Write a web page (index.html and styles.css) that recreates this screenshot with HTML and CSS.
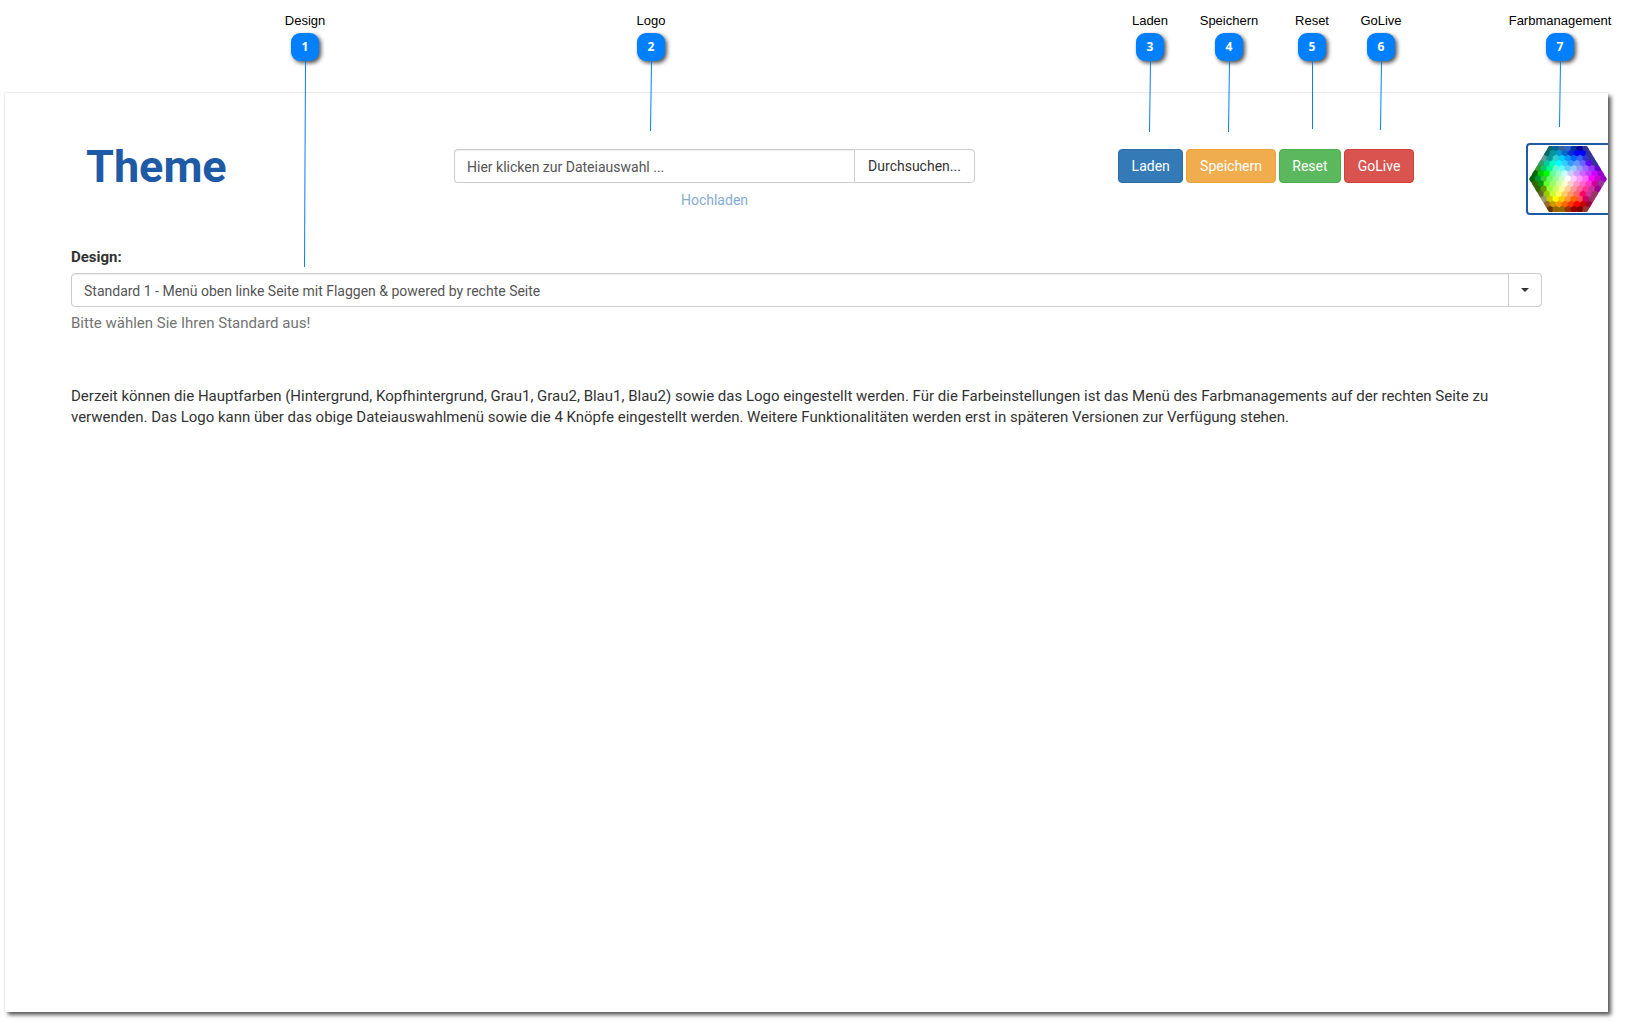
FILE: index.html
```html
<!DOCTYPE html>
<html lang="de">
<head>
<meta charset="utf-8">
<title>Theme</title>
<link rel="stylesheet" href="styles.css">
</head>
<body>
<main class="panel">
  <header class="toolbar">
    <h1 class="title">Theme</h1>
    <form class="upload">
      <div class="input-group">
        <input class="field" type="text" aria-label="Logo" value="Hier klicken zur Dateiauswahl ..." readonly>
        <button class="addon" type="button">Durchsuchen...</button>
      </div>
      <a class="upload-link" href="#">Hochladen</a>
    </form>
    <div class="actions">
      <button class="btn btn-primary" type="button">Laden</button>
      <button class="btn btn-warning" type="button">Speichern</button>
      <button class="btn btn-success" type="button">Reset</button>
      <button class="btn btn-danger" type="button">GoLive</button>
    </div>
    <button class="picker" type="button" aria-label="Farbmanagement">
      <svg class="wheel" viewBox="0 0 78 66" aria-hidden="true">
        <defs><clipPath id="hex"><path d="M20 0H58L78 33L58 66H20L0 33Z"/></clipPath></defs>
        <g id="cells" clip-path="url(#hex)"></g>
      </svg>
    </button>
  </header>
  <section class="content">
    <label class="label" for="design">Design:</label>
    <div class="select-wrap">
      <select class="select" id="design">
        <option>Standard 1 - Menü oben linke Seite mit Flaggen &amp; powered by rechte Seite</option>
      </select>
      <span class="caret-box"><span class="caret"></span></span>
    </div>
    <p class="help">Bitte wählen Sie Ihren Standard aus!</p>
    <p class="text">Derzeit können die Hauptfarben (Hintergrund, Kopfhintergrund, Grau1, Grau2, Blau1, Blau2) sowie das Logo eingestellt werden. Für die Farbeinstellungen ist das Menü des Farbmanagements auf der rechten Seite zu verwenden. Das Logo kann über das obige Dateiauswahlmenü sowie die 4 Knöpfe eingestellt werden. Weitere Funktionalitäten werden erst in späteren Versionen zur Verfügung stehen.</p>
  </section>
</main>

<div class="callout callout-1"><span>Design</span><b class="badge">1</b><svg class="line" width="4" height="206"><path d="M2.5 0L1.5 206"/></svg></div>
<div class="callout callout-2"><span>Logo</span><b class="badge">2</b><svg class="line" width="4" height="70"><path d="M2.5 0L1.5 70"/></svg></div>
<div class="callout callout-3"><span>Laden</span><b class="badge">3</b><svg class="line" width="4" height="71"><path d="M2.5 0L1.5 71"/></svg></div>
<div class="callout callout-4"><span>Speichern</span><b class="badge">4</b><svg class="line" width="4" height="71"><path d="M2.5 0L1.5 71"/></svg></div>
<div class="callout callout-5"><span>Reset</span><b class="badge">5</b><svg class="line" width="4" height="68"><path d="M2.5 0V68"/></svg></div>
<div class="callout callout-6"><span>GoLive</span><b class="badge">6</b><svg class="line" width="4" height="69"><path d="M2.5 0L1.5 69"/></svg></div>
<div class="callout callout-7"><span>Farbmanagement</span><b class="badge">7</b><svg class="line" width="4" height="66"><path d="M2.5 0L1.5 66"/></svg></div>
<script src="wheel.js"></script>
</body>
</html>
```
FILE: styles.css
```css
* { box-sizing: border-box; }
body {
  margin: 0;
  min-height: 100vh;
  padding: 93px 19px 9px 5px;
  display: flex;
  background: #fff;
  color: #333;
  font: 15px/21px Roboto, "Liberation Sans", sans-serif;
}
button, input, select { font: 14px/20px Roboto, "Liberation Sans", sans-serif; }
.panel {
  flex: 1;
  min-width: 0;
  box-shadow: 3px 3px 4px rgba(0, 0, 0, .65), 0 0 2px rgba(0, 0, 0, .15);
  background: #fff;
}
.toolbar {
  display: grid;
  grid-template-columns: 368fr 521fr 143fr 408px 82px;
  padding: 50px 0 0 81px;
  height: 140px;
  overflow: hidden;
}
.title {
  margin: 0;
  font-size: 45px;
  line-height: 48px;
  font-weight: 700;
  color: #1e5aa5;
}
.upload { padding-top: 6px; text-align: center; }
.input-group { display: flex; }
.field {
  flex: 1;
  min-width: 0;
  height: 34px;
  padding: 7px 12px 5px;
  border: 1px solid #ccc;
  border-right: 0;
  border-radius: 4px 0 0 4px;
  box-shadow: inset 0 1px 1px rgba(0, 0, 0, .075);
  color: #555;
}
.addon {
  width: 121px;
  height: 34px;
  padding: 6px 12px;
  border: 1px solid #ccc;
  border-radius: 0 4px 4px 0;
  background: #fff;
  color: #333;
}
.upload-link {
  display: inline-block;
  margin-top: 7px;
  font-size: 14px;
  color: #84acd2;
  text-decoration: none;
}
.actions {
  grid-column: 4;
  display: flex;
  align-items: flex-start;
  gap: 3px;
  width: 296px;
  padding-top: 6px;
}
.btn {
  flex: 1 0 auto;
  height: 34px;
  padding: 6px 12px;
  border: 1px solid;
  border-radius: 4px;
  color: #fff;
}
.btn-primary { background: #337ab7; border-color: #2e6da4; }
.btn-warning { background: #f0ad4e; border-color: #eea236; }
.btn-success { background: #5cb85c; border-color: #4cae4c; }
.btn-danger { background: #d9534f; border-color: #d43f3a; }
.picker {
  width: 88px;
  height: 72px;
  padding: 1px;
  border: 2px solid #1e5aa5;
  border-radius: 4px;
  background: #fff;
  text-align: left;
}
.wheel { display: block; width: 78px; height: 66px; }
.content { padding: 14px 66px 0; }
.label { display: block; margin-bottom: 5px; font-weight: 700; }
.select-wrap { display: grid; }
.select, .caret-box { grid-area: 1 / 1; }
.select {
  appearance: none;
  height: 34px;
  padding: 7px 46px 5px 12px;
  border: 1px solid #ccc;
  border-radius: 4px;
  background: #fff;
  box-shadow: inset 0 1px 1px rgba(0, 0, 0, .075);
  color: #555;
}
.caret-box {
  justify-self: end;
  width: 34px;
  border: 1px solid #ccc;
  border-radius: 0 4px 4px 0;
  background: #fff;
  display: grid;
  place-items: center;
  pointer-events: none;
}
.caret { border: 4px solid transparent; border-top-color: #333; border-bottom: 0; }
.help { margin: 6px 0 0; color: #737373; }
.text { margin: 52px 0 0; }

/* Callouts lie over the page and point at its controls */
.callout {
  position: absolute;
  top: 13px;
  width: 110px;
  display: flex;
  flex-direction: column;
  align-items: center;
  color: #000;
  font: 13px/16px "Liberation Sans", Arial, sans-serif;
  pointer-events: none;
}
.badge {
  width: 28px;
  height: 28px;
  margin-top: 4px;
  border-radius: 9px;
  background: #0080ff;
  box-shadow: 2px 2px 4px rgba(0, 0, 0, .7);
  color: #fff;
  font: 700 12px/28px "Open Sans", sans-serif;
  text-align: center;
}
.line { display: block; }
.line path { stroke: #0080ff; fill: none; }
.callout-1 { left: 250px; }
.callout-2 { left: 596px; }
.callout-3 { left: 1095px; }
.callout-4 { left: 1174px; }
.callout-5 { left: 1257px; }
.callout-6 { left: 1326px; }
.callout-7 { left: 1505px; }
```
FILE: wheel.js
```js
// Web-safe colour map, one string per row of hexagon cells
const rows = [
  "006666 006699 336699 3366cc 003399 003399 000099 333399",
  "006666 009999 0099cc 0066cc 0033cc 0000ff 0000ff 333399",
  "669999 009999 33cccc 00ccff 0099ff 0066ff 3366ff 3333cc 333399",
  "339966 00cc99 00ffcc 00ffff 33ccff 3399ff 6699ff 6666ff 6600ff 333399",
  "339933 00cc66 00ff99 66ffcc 66ffff 66ccff 99ccff 9999ff 9966ff 9933ff 6600cc",
  "006600 00cc00 00ff00 66ff99 99ffcc ccffff ccccff cc99ff cc66ff cc33ff cc00ff 9900cc",
  "006600 009933 33cc33 66ff66 99ff99 ccffcc ffffff ffccff ff99ff ff66ff ff00ff cc00cc 9900cc",
  "336600 009900 66ff33 99ff66 ccff99 ffffcc ffcccc ff99cc ff66cc ff33cc cc0099 993399",
  "336600 669900 99ff33 ccff66 ffff99 ffcc99 ff9999 ff6699 ff3399 cc3399 990099",
  "666633 99cc00 ccff33 ffff66 ffcc66 ff9966 ff6666 ff0066 cc3399 993366",
  "999966 cccc00 ffff00 ffcc00 ff9933 ff6600 ff5050 cc0066 993366",
  "996633 cc9900 ff9900 ff6600 ff3300 ff0000 cc0000 990033",
  "663300 996600 996600 993300 990000 800000 993333"
];
rows[0] = rows[0].replace("003399 003399", "003399");
const w = 6, h = 5.1;
document.getElementById("cells").innerHTML = rows.map((row, r) => {
  const cells = row.split(" ");
  return cells.map((c, i) => {
    const x = 39 + (i - (cells.length - 1) / 2) * w;
    const y = 33 + (r - 6) * h;
    return `<path fill="#${c}" stroke="#${c}" stroke-width=".6" d="M${x} ${y - 3.6}l3.1 1.8v3.6l-3.1 1.8l-3.1 -1.8v-3.6z"/>`;
  }).join("");
}).join("");
```
